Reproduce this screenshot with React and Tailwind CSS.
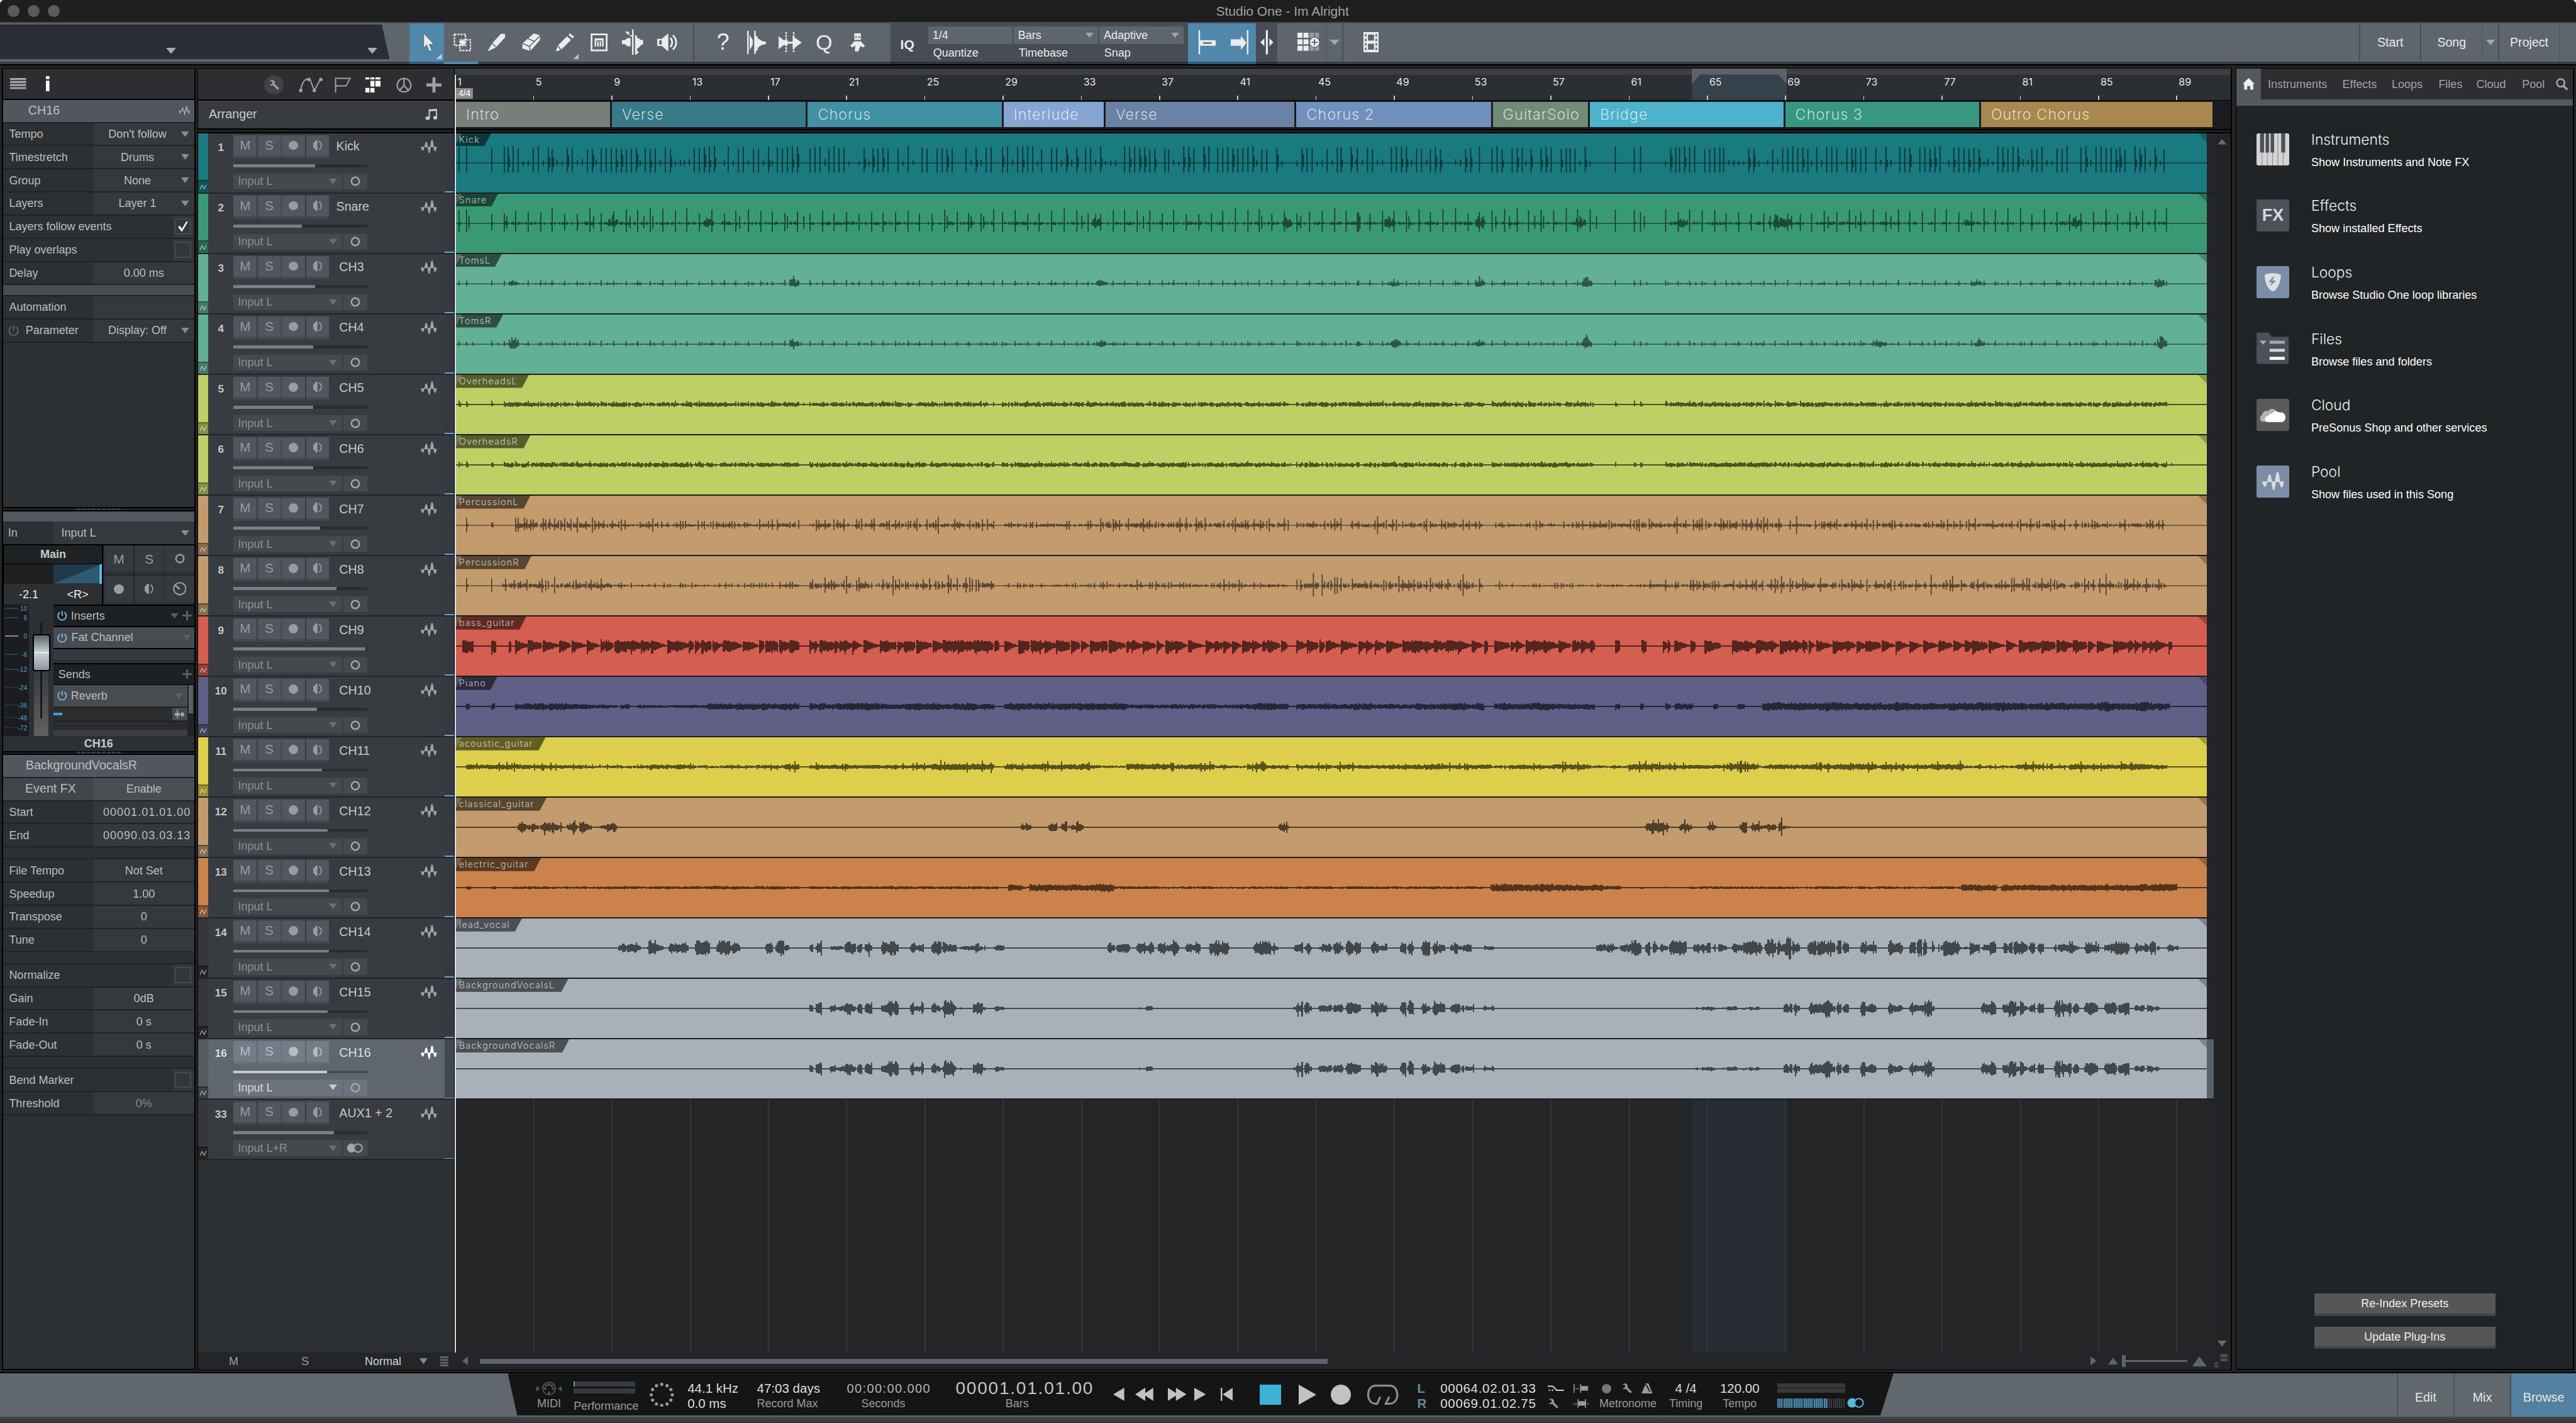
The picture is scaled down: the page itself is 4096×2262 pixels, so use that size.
import React from "react";

/* ---------- shared glyphs ---------- */

const Down = ({ className }) => (
  <svg viewBox="0 0 10 7" preserveAspectRatio="none" className={`shrink-0 ${className}`}>
    <path d="M0 0h10L5 7z" fill="currentColor" />
  </svg>
);

const Svg = ({ box, className, children }) => (
  <svg viewBox={box} className={`shrink-0 ${className}`} fill="currentColor">
    {children}
  </svg>
);

const WaveGlyph = ({ className }) => (
  <Svg box="0 0 32 28" className={className}>
    <path d="M0 14h7.500c-1 5-2 8-3.500 8s-3-4-4-8zM7 15C8.500 9 9 4 11 4s2.500 6 3.500 11zM13.500 14h6.500c-1 8-1.500 13-3 13s-2.800-6-3.500-13zM18.500 15C20 6 20.500 0 22.500 0s3 8 3.700 15zM25 14h7c-1 5-2 9-3.500 9s-2.700-4-3.500-9z" />
  </Svg>
);

const Power = ({ className }) => (
  <Svg box="0 0 24 24" className={className}>
    <path d="M7.500 4.500a9 9 0 1 0 9 0M12 2v10" fill="none" stroke="currentColor" strokeWidth="2.600" />
  </Svg>
);

const Plus = ({ className }) => (
  <Svg box="0 0 20 20" className={className}>
    <path d="M8 0h4v8h8v4h-8v8H8v-8H0V8h8z" />
  </Svg>
);

const Wrench = ({ className }) => (
  <Svg box="0 0 22 22" className={className}>
    <path d="M2 4a6 6 0 0 1 9-1 6 6 0 0 1 1 6l9 9-3 3-9-9a6 6 0 0 1-7-1l4-1 2-2-1-4z" />
  </Svg>
);

const Monitor = ({ className }) => (
  <Svg box="0 0 18 20" className={className}>
    <path d="M8.500 0v20H5.500L0 14V6L5.500 0z" />
    <path d="M11.500 2c6 3 6 13 0 16" fill="none" stroke="currentColor" strokeWidth="2.200" />
  </Svg>
);

const Ring = ({ className }) => (
  <Svg box="0 0 20 20" className={className}>
    <circle cx="10" cy="10" r="7.800" fill="none" stroke="currentColor" strokeWidth="3" />
  </Svg>
);

const Dot = ({ className }) => <div className={`rounded-full shrink-0 ${className}`} />;

const Bars3 = ({ className }) => (
  <svg viewBox="0 0 32 22" preserveAspectRatio="none" fill="currentColor" className={`shrink-0 ${className}`}>
    <path d="M0 0h32v4H0zM0 6h32v4H0zM0 12h32v4H0zM0 18h32v4H0z" />
  </svg>
);

/* ---------- title bar and toolbar ---------- */

function TitleBar() {
  return (
    <header className="flex h-44 shrink-0 items-center bg-[#1e1e1e] pl-15">
      <div className="flex gap-16">
        <Dot className="size-24 bg-[#5b5b5b]" />
        <Dot className="size-24 bg-[#5b5b5b]" />
        <Dot className="size-24 bg-[#5b5b5b]" />
      </div>
      <div className="ml-2297 whitespace-nowrap text-[21px] text-[#a2a2a2]">Studio One - Im Alright</div>
    </header>
  );
}

const TOOL_ICONS = [
  <Svg key="arrow" box="0 0 24 36" className="ml-4 h-36 w-24">
    <path d="M1 0v29l6-6 5 13 5-2-5-12h9z" stroke="#3c5566" strokeWidth="1" />
  </Svg>,
  <Svg key="range" box="0 0 36 36" className="size-36">
    <path d="M2 2h22v22H2zM13 13h21v21H13z" fill="none" stroke="currentColor" strokeWidth="3" strokeDasharray="4 2" />
    <path d="M14 14h9v9h-9z" />
  </Svg>,
  <Svg key="split" box="0 0 36 36" className="size-36">
    <path d="M27 1h8v7L18 27l-8-8zM9 21l8 7L0 36z" />
  </Svg>,
  <Svg key="erase" box="0 0 38 36" className="h-36 w-38">
    <path d="M25 0l12 4v9L18 35 2 30V20z" />
    <path d="M2 20l14 6L37 5M16 26l2 9M12 10l14 6" fill="none" stroke="#5f656d" strokeWidth="2" />
  </Svg>,
  <Svg key="paint" box="0 0 36 36" className="size-36">
    <path d="M22 6l8 7L11 32l-7-8zM25 3l3-3 8 7-3 3zM3 26l6 7-9 3z" />
  </Svg>,
  <Svg key="mute" box="0 0 34 36" className="h-36 w-34">
    <path d="M2 2h30v32H2z" fill="none" stroke="currentColor" strokeWidth="3.500" />
    <path d="M8 10h18v16H8z" />
    <path d="M12 26V15h10v11M17 15v11" fill="none" stroke="#5f656d" strokeWidth="2" />
  </Svg>,
  <Svg key="bend" box="0 0 46 50" className="h-50 w-46">
    <path d="M0 21h6l5-4h6v16h-6l-5-4H0zM6 4h8v7l6 4V0h3v50h-3V12L12 10zM26 10l4 3v3l4 2 4 3h4v8l-4 2-4 4-4 3v4l-4 3zM26 40l8 5-8 6z" />
  </Svg>,
  <Svg key="listen" box="0 0 40 36" className="h-36 w-40">
    <path d="M0 11h9L22 0v36L9 25H0z" />
    <path d="M4 14v8h5v-8z" fill="#5f656d" />
    <path d="M26 9c5 5 5 13 0 18M31 4c9 8 9 20 0 28" fill="none" stroke="currentColor" strokeWidth="3.500" />
  </Svg>,
];

const EDIT_ICONS = [
  <span key="help" className="text-[36px] font-normal">?</span>,
  <Svg key="strip" box="0 0 38 46" className="h-46 w-38">
    <path d="M0 0h3v46H0zM5 8l6 10V28L5 38zM14 0h3v46h-3zM17 9l4 3v3l4 2 4 3 9 2v4l-9 2-4 3-4 3v4l-4 3z" />
  </Svg>,
  <Svg key="stretch" box="0 0 46 42" className="h-42 w-46">
    <path d="M0 8l10 8h8v10h-8L0 34zM46 21L28 8v26zM18 19h10v4H18z" />
    <path d="M15 0v42M30 0v42" stroke="currentColor" strokeWidth="3" strokeDasharray="4 2" />
  </Svg>,
  <span key="q" className="text-[34px]">Q</span>,
  <Svg key="macro" box="0 0 30 36" className="h-36 w-30">
    <path d="M8 0h13v13H8zM0 25l8-9h13l8 9-3 3-6-3-4 11h-7l1-12-6 4z" />
    <path d="M10 6h3v3h-3zM16 6h3v3h-3z" fill="#5f656d" />
  </Svg>,
];

function Toolbar() {
  return (
    <div className="flex h-84 shrink-0 border-t-2 border-[#484c54] bg-[#5f656d] text-[#ececec]">
      <div className="relative flex w-814 shrink-0 flex-col pt-2">
        <div className="flex h-70 w-774 items-end bg-[#2a2d34] pb-11 [clip-path:polygon(0_0,98%_0,100%_100%,0_100%)]">
          <Down className="ml-330 h-12 w-20 text-[#a9abae]" />
          <Down className="ml-380 h-12 w-20 text-[#a9abae]" />
        </div>
        <div className="mt-4 h-6 bg-[#3c3e45]" />
      </div>
      {TOOL_ICONS.map((icon, i) => (
        <div key={i} className="flex w-68 shrink-0 flex-col">
          <div className={`relative flex h-76 items-center justify-center pl-5 ${i === 0 ? "bg-[#5088ab]" : ""}`}>
            {icon}
            {(i === 0 || i === 4) && (
              <Svg box="0 0 12 12" className="absolute right-4 bottom-4 size-12 text-white/60">
                <path d="M12 0v12H0z" />
              </Svg>
            )}
          </div>
          <div className={`h-6 ${i === 0 ? "bg-[#38597a]" : i === 1 ? "bg-[#5088ab]" : "bg-[#3c3e45]"}`} />
        </div>
      ))}
      <div className="flex w-412 flex-col">
        <div className="flex h-76">
          <div className="w-22 border-r-2 border-[#484c54]" />
          <div className="flex w-390 pl-23">
            {EDIT_ICONS.map((icon, i) => (
              <div key={i} className="flex w-67 items-center justify-center">{icon}</div>
            ))}
          </div>
        </div>
        <div className="h-6 bg-[#3c3e45]" />
      </div>
      <div className="flex w-768 flex-col">
        <div className="flex h-76 bg-[#484c54]">
          <div className="flex w-74 items-center pt-6 pl-19 text-[21px] font-bold">IQ</div>
          <div className="flex w-508 gap-2 pt-6">
            {[
              ["1/4", "Quantize", false],
              ["Bars", "Timebase", true],
              ["Adaptive", "Snap", true],
            ].map(([value, label, menu]) => (
              <div key={label} className="flex w-168 flex-col text-[18px]">
                <div className="flex h-36 items-center justify-between bg-[#5f656d] pr-9 pl-9">
                  {value}
                  {menu && <Down className="h-10 w-16 text-[#a2a5a9]" />}
                </div>
                <div className="flex h-36 items-center pl-10">{label}</div>
              </div>
            ))}
          </div>
          <div className="ml-8 flex w-136 items-center bg-[#5088ab] pl-20">
            <Svg box="0 0 36 48" className="h-48 w-36">
              <path d="M1 0h3v48H1zM4 20h31v11H4z" />
              <path d="M10 24h17v3H10z" fill="#5f656d" />
            </Svg>
            <Svg box="0 0 36 48" className="ml-29 h-48 w-36">
              <path d="M32 0h3v48h-3zM0 18h20v-7l11 14-11 14v-8H0z" />
            </Svg>
          </div>
          <div className="flex flex-1 items-center justify-center">
            <Svg box="0 0 26 48" className="h-48 w-26">
              <path d="M11 0h4v48h-4zM8 16v16L0 24zM18 16v16l8-8z" />
            </Svg>
          </div>
        </div>
        <div className="flex h-6 bg-[#303238]">
          <div className="ml-590 w-136 bg-[#38597a]" />
        </div>
      </div>
      <div className="flex flex-1 flex-col">
        <div className="flex h-76">
          <div className="flex w-99 items-center border-r-2 border-[#555b62] pl-40">
            <Svg box="0 0 44 38" className="h-38 w-44">
              <path d="M0 0h10v10H0zM12 0h10v10H12zM0 13h10v10H0zM12 13h10v10H12zM0 26h10v10H0zM12 26h10v10H12z" />
              <path d="M24 0h9v10h-9zM35 0h8v10h-8zM24 26h9v10h-9zM35 26h8v10h-8z" opacity=".4" />
              <circle cx="34" cy="19" r="10" stroke="#5f656d" strokeWidth="1.500" />
              <path d="M28 19h12M34 13v12" stroke="#484c54" strokeWidth="2" />
            </Svg>
          </div>
          <div className="flex w-32 items-center justify-center border-r-2 border-[#484c54]">
            <Down className="h-11 w-20 text-[#a2a5a9]" />
          </div>
          <div className="flex w-110 items-center justify-center">
            <Svg box="0 0 30 40" className="h-40 w-30">
              <path d="M0 0h30v40H0z" />
              <path d="M9 5h12v12H9zM9 23h12v12H9zM3 4h3v5H3zM3 13h3v5H3zM3 22h3v5H3zM3 31h3v5H3zM24 4h3v5h-3zM24 13h3v5h-3zM24 22h3v5h-3zM24 31h3v5h-3z" fill="#5f656d" />
            </Svg>
          </div>
          <div className="ml-1908 flex text-[19.600px]">
            <div className="flex w-122 items-center justify-center border-l-2 border-[#484c54]">Start</div>
            <div className="flex w-122 items-center justify-center border-l-2 border-[#484c54]">Song</div>
            <div className="flex w-32 items-center justify-center border-l-2 border-[#565c63]">
              <Down className="h-11 w-18 text-[#a2a5a9]" />
            </div>
            <div className="flex w-122 items-center justify-center border-l-2 border-[#484c54]">Project</div>
            <div className="w-32 border-l-2 border-[#565c63]" />
          </div>
        </div>
        <div className="h-6 bg-[#3c3e45]" />
      </div>
    </div>
  );
}

/* ---------- inspector ---------- */

function Row({ label, value, menu, check, dim, lit, power, mono }) {
  const isCheck = check !== undefined;
  return (
    <div className={`flex h-46 shrink-0 border-b-2 border-[#202326] text-[18px] text-[#bcbebf] ${lit ? "bg-[#42464a]" : "bg-[#2c3033]"}`}>
      <div className={`flex items-center whitespace-nowrap ${isCheck ? "w-336" : "w-180"} ${lit ? "pl-44 text-[19.700px]" : "pl-12"}`}>
        {power && <Power className="mr-12 -ml-3 size-24 text-[#5d6062]" />}
        {label}
      </div>
      {isCheck ? (
        <div className="flex w-44 items-center justify-center bg-[#33373a]">
          <div className="flex size-32 items-center justify-center border-2 border-[#46494d]">
            {check && (
              <Svg box="0 0 22 22" className="size-22 text-white">
                <path d="M1 12l4-2 4 6L18 1l3 1L9 22z" />
              </Svg>
            )}
          </div>
        </div>
      ) : (
        <div className={`flex w-200 items-center ${lit ? "bg-[#4b4f53]" : "bg-[#35383c]"}`}>
          <div className={`flex-1 whitespace-nowrap text-center ${dim ? "text-[#85898c]" : ""} ${mono ? "pl-12 tracking-[1px]" : ""}`}>{value}</div>
          {menu && <Down className="mr-10 h-11 w-16 text-[#8a8c8e]" />}
        </div>
      )}
    </div>
  );
}

const Spacer = () => <div className="h-24 shrink-0 border-b-2 border-[#202326] bg-[#2c3033]" />;

const Grip = () => (
  <div className="flex h-8 shrink-0 items-center border-y-2 border-black bg-[#222325] pl-146">
    <div className="flex gap-2">
      {Array.from({ length: 9 }, (_, i) => (
        <div key={i} className="h-4 w-8 bg-[#3c3f44]" />
      ))}
    </div>
  </div>
);

const FADER_MARKS = [
  ["10", "h-19"], ["6", "h-36"], ["0", "h-36"], ["-6", "h-30"], ["-12", "h-36"],
  ["-24", "h-35"], ["-36", "h-25"], ["-48", "h-20"], ["-72", "h-20"],
];

function ChannelStrip() {
  const cell = "flex items-center justify-center border-b-4 border-[#2d3034] bg-[#36393e] text-[21px] text-[#9a9c9d]";
  return (
    <div className="flex h-380 shrink-0 flex-col bg-black pt-2">
      <div className="flex h-118">
        <div className="flex w-199 flex-col px-2">
          <div className="flex h-36 items-center justify-center bg-[#1e2225] text-[18px] font-bold text-[#c9cbcc]">Main</div>
          <div className="mt-2 flex h-38">
            <div className="w-98 bg-[#1f1f20]" />
            <svg viewBox="0 0 91 38" preserveAspectRatio="none" className="h-38 w-91">
              <path d="M0 0h91v38H0z" fill="#203a4c" />
              <path d="M0 38L91 2v36z" fill="#2e5a71" />
            </svg>
            <div className="w-6 bg-[#5cb8f0]" />
          </div>
          <div className="flex h-42 items-center bg-[#2c3033] text-[18px] text-[#eeeeee]">
            <div className="w-98 text-center">-2.1</div>
            <div className="w-97 text-center">&lt;R&gt;</div>
          </div>
        </div>
        <div className="grid flex-1 grid-cols-3 grid-rows-2 gap-2 bg-[#232629] pl-2">
          <div className={cell}>M</div>
          <div className={cell}>S</div>
          <div className={cell}><Ring className="size-20" /></div>
          <div className={cell}><Dot className="size-19 bg-[#9a9c9d]" /></div>
          <div className={cell}><Monitor className="h-20 w-18" /></div>
          <div className={cell}>
            <Svg box="0 0 26 26" className="size-27">
              <circle cx="13" cy="13" r="11.500" fill="none" stroke="currentColor" strokeWidth="2.500" />
              <path d="M4 6l9 8" stroke="currentColor" strokeWidth="3.500" />
            </Svg>
          </div>
        </div>
      </div>
      <div className="flex h-260">
        <div className="flex w-52 flex-col overflow-hidden bg-[#1b1d20] pl-4">
          {FADER_MARKS.map(([mark, h]) => (
            <div key={mark} className={`flex shrink-0 items-start justify-between pr-4 ${h}`}>
              <div className={`mt-6 h-2 w-26 ${mark === "0" ? "bg-[#8a8d90]" : "bg-[#1f465a]"}`} />
              <span className="mt-2 text-[10px] text-[#4fa3cf]">{mark}</span>
            </div>
          ))}
        </div>
        <div className="relative w-48 bg-[#2c3033]">
          <div className="absolute bottom-0 left-10 h-130 w-28 bg-linear-to-b from-[#383b3e] to-[#606163]" />
          <div className="absolute top-36 left-22 h-190 w-4 bg-[#17191b]" />
          <div className="absolute top-58 left-7 flex h-74 w-35 flex-col items-center justify-center rounded-sm border-2 border-black bg-linear-to-b from-[#5d666b] via-[#c9d4da] to-[#8d979c]">
            <div className="h-2 w-full bg-white" />
          </div>
        </div>
        <div className="flex flex-1 flex-col text-[18px] text-[#b9bcbe]">
          <div className="mt-2 flex h-40 items-center bg-[#1d2124] pl-6">
            <Power className="size-22 text-[#79b9df]" />
            <span className="ml-7">Inserts</span>
            <Down className="ml-auto h-10 w-16 text-[#5b5e60]" />
            <Plus className="mr-5 ml-8 size-19 text-[#5b5e60]" />
          </div>
          <div className="mt-2 flex h-42 items-center bg-[#474c51] pl-6">
            <Power className="size-22 text-[#79b9df]" />
            <span className="ml-8">Fat Channel</span>
            <Down className="mr-6 ml-auto h-11 w-16 text-[#5c6165]" />
          </div>
          <div className="mt-2 h-21 bg-[#36393f]" />
          <div className="h-7 bg-[#2c3033]" />
          <div className="mt-2 flex h-40 items-center bg-[#1d2124] pl-10">
            Sends
            <Plus className="mr-5 ml-auto size-19 text-[#5b5e60]" />
          </div>
          <div className="mt-2 flex flex-1 bg-[#202225]">
            <div className="flex w-266 flex-col">
              <div className="flex h-42 items-center bg-[#474c51] pl-6">
                <Power className="size-22 text-[#79b9df]" />
                <span className="ml-7">Reverb</span>
                <Down className="mr-8 ml-auto h-11 w-16 text-[#5c6165]" />
              </div>
              <div className="mt-2 flex h-26">
                <div className="flex flex-1 items-center bg-[#2b2d2f]">
                  <div className="h-6 w-18 bg-[#41a6dd]" />
                </div>
                <div className="flex w-30 items-center justify-center bg-[#474c51] text-[#a8abad]">
                  <Svg box="0 0 18 18" className="size-18">
                    <path d="M4 0h2v18H4zM0 7h10v5H0zM12 6h6v7h-6z" />
                  </Svg>
                </div>
              </div>
              <div className="mt-3 h-6 bg-[#2b2d2f]" />
              <div className="mt-2 h-6 bg-[#2b2d2f]" />
              <div className="mt-1 flex-1 bg-[#3a3e42]" />
            </div>
            <div className="ml-3 h-56 w-9 bg-[#5e5f69]" />
          </div>
        </div>
      </div>
    </div>
  );
}

function Inspector() {
  return (
    <aside className="w-384 shrink-0 bg-black p-2">
      <div className="flex h-full flex-col bg-[#2c3033]">
        <div className="flex h-60 shrink-0 items-center bg-[#2e2d32] pl-14">
          <Bars3 className="h-22 w-32 text-[#a4a6a8]" />
          <Svg box="0 0 8 30" className="ml-39 h-30 w-8 text-white">
            <path d="M0 0h7v6H0zM0 9h7v21H0z" />
          </Svg>
        </div>
        <div className="h-2 shrink-0 bg-black" />
        <div className="flex h-46 shrink-0 items-center justify-between border-b-2 border-[#202326] bg-[#52565f] pr-8 pl-50 text-[19.700px] text-[#bdbfc1]">
          CH16
          <WaveGlyph className="h-20 w-23 text-[#9fa2a5]" />
        </div>
        <Row label="Tempo" value="Don't follow" menu />
        <Row label="Timestretch" value="Drums" menu />
        <Row label="Group" value="None" menu />
        <Row label="Layers" value="Layer 1" menu />
        <Row label="Layers follow events" check />
        <Row label="Play overlaps" check={false} />
        <Row label="Delay" value="0.00 ms" />
        <div className="h-22 shrink-0 border-b-2 border-[#202326] bg-[#474c50]" />
        <Row label="Automation" value="" />
        <Row label="Parameter" value="Display: Off" menu power />
        <div className="h-327 shrink-0" />
        <Grip />
        <div className="h-20 shrink-0 bg-[#52565f]" />
        <div className="flex h-46 shrink-0 items-center text-[18px] text-[#bcbebf]">
          <div className="w-102 pl-10">In</div>
          <div className="flex h-full flex-1 items-center justify-between bg-[#35383c] pr-10 pl-14">
            Input L
            <Down className="h-11 w-16 text-[#8a8c8e]" />
          </div>
        </div>
        <ChannelStrip />
        <div className="flex h-30 shrink-0 items-center justify-center text-[18px] font-bold text-[#c9cbcc]">CH16</div>
        <Grip />
        <div className="flex h-46 shrink-0 items-center border-b-2 border-[#202326] bg-[#52565f] pl-45 text-[19.700px] text-[#bdbfc1]">BackgroundVocalsR</div>
        <Row label="Event FX" value="Enable" lit />
        <Row label="Start" value="00001.01.01.00" mono />
        <Row label="End" value="00090.03.03.13" mono />
        <Spacer />
        <Row label="File Tempo" value="Not Set" />
        <Row label="Speedup" value="1.00" />
        <Row label="Transpose" value="0" />
        <Row label="Tune" value="0" />
        <Spacer />
        <Row label="Normalize" check={false} />
        <Row label="Gain" value="0dB" />
        <Row label="Fade-In" value="0 s" />
        <Row label="Fade-Out" value="0 s" />
        <Spacer />
        <Row label="Bend Marker" check={false} />
        <Row label="Threshold" value="0%" dim />
      </div>
    </aside>
  );
}

/* ---------- waveforms ---------- */

const EVENT_W = 3479;
const STEP = 2.5;
const COLS = Math.floor(EVENT_W / STEP);

// Phrases are listed in overview units; the song is mapped in two stretches.
const part1 = (list) => list.map(([a, b, k = 1]) => [a * 1.148 - 6, b * 1.148 - 6, k]);
const part2 = (list) => list.map(([a, b, k = 1]) => [a * 1.135 + 1754, b * 1.135 + 1754, k]);

const BAND = [
  ...part1([[10, 14], [23, 27], [66, 70], [87, 600], [617, 938], [951, 1446], [1461, 1568]]),
  ...part2([[32, 253], [268, 446], [484, 488], [516, 520], [528, 532], [571, 1451]]),
];
const PERC_L = [
  ...part1([[23, 27, 1.4], [66, 71, 1.2], [107, 275, 1.3], [275, 560, 0.75], [560, 600, 0.9], [617, 938, 1], [955, 1120, 0.7], [1120, 1446, 1.1], [1461, 1568, 0.9]]),
  ...part2([[35, 253, 0.9], [275, 440, 0.7], [440, 570, 1], [570, 620, 0.9], [620, 785, 1.2], [785, 1451, 0.95]]),
];
const PERC_R = [
  ...part1([[23, 27, 1.4], [66, 71, 1.2], [85, 275, 1.1], [275, 560, 0.45], [560, 600, 0.7], [617, 938, 1.25], [955, 1120, 0.45], [1120, 1446, 0.65], [1461, 1568, 1.25]]),
  ...part2([[35, 253, 1.2], [275, 540, 0.45], [540, 730, 0.9], [730, 1451, 1.15]]),
];
const ACOUSTIC = [
  ...part1([[23, 600], [617, 938], [955, 1446], [1461, 1568]]),
  ...part2([[35, 1451]]),
];
const BASS = [
  ...part1([[17, 36], [66, 75], [97, 102], [107, 600], [617, 945], [955, 1447], [1461, 1568]]),
  ...part2([[35, 260], [272, 448], [484, 492], [529, 538], [568, 581], [587, 624], [640, 668], [688, 1460]]),
];
const PIANO = [
  ...part1([[23, 30], [66, 73], [108, 245], [245, 285, 0.5], [290, 305, 0.7], [318, 440, 0.5], [440, 600], [617, 938], [955, 1165, 1.1], [1165, 1385, 0.7], [1385, 1446], [1461, 1568]]),
  ...part2([[35, 255], [271, 448], [484, 492], [527, 535], [571, 581], [587, 620], [655, 663], [698, 710], [742, 1455, 1.25]]),
];
const CLASSICAL = [
  ...part1([[112, 150], [152, 240, 1.2], [253, 285], [984, 1003], [1030, 1047], [1052, 1092, 1.2], [1430, 1446, 1.1]]),
  ...part2([[537, 578, 1.2], [595, 620], [645, 662, 0.8], [701, 714, 1.2], [722, 790]]),
];
const ELECTRIC = [
  ...part1([[23, 32, 0.5], [66, 76, 0.5], [103, 600, 0.45], [617, 944, 0.45], [962, 985, 1], [985, 998, 0.4], [998, 1145, 1.25], [1145, 1446, 0.4], [1461, 1568, 0.4]]),
  ...part2([[35, 255, 0.4], [265, 462, 1.1], [462, 495, 0.6], [527, 535, 0.4], [571, 573, 0.4], [613, 1088, 0.4], [1088, 1152, 1], [1160, 1468, 1.05]]),
];
const CHORUSES = [
  ...part1([[617, 624], [627, 640], [653, 678, 0.6], [678, 698, 1.1], [701, 709], [712, 725, 1.1], [741, 771, 1.2], [791, 816, 0.9], [828, 871, 1.2], [879, 922, 0.8], [937, 955, 0.5], [1455, 1459, 0.6], [1461, 1471, 1.1], [1474, 1486, 0.9], [1498, 1520, 0.6], [1522, 1540, 1.1], [1544, 1568]]),
  ...part2([[12, 20], [26, 38], [56, 70, 1.2], [70, 85, 0.8], [107, 117, 1.1], [119, 131, 1.1], [143, 160], [163, 186, 1.2], [195, 240, 0.8], [252, 272, 0.5]]),
];
const LEAD = [
  ...CHORUSES,
  ...part1([[287, 291, 1.3], [291, 326, 0.8], [336, 365], [373, 408, 0.9], [420, 446], [456, 498], [542, 555], [558, 583], [1134, 1147], [1149, 1172, 0.8], [1183, 1214], [1220, 1257], [1268, 1295], [1303, 1345], [1385, 1430]]),
  ...part2([[450, 488, 0.7], [492, 530], [536, 578], [579, 612, 1.3], [620, 680, 0.8], [688, 740], [746, 780, 1.1], [780, 792, 1.7], [792, 808], [820, 868, 1.2], [870, 880], [882, 892], [912, 942, 1.1], [961, 988, 1.1], [998, 1042, 1.1], [1050, 1122, 1.1], [1127, 1150, 1.2], [1162, 1205], [1208, 1220], [1223, 1235], [1253, 1295, 1.1], [1305, 1332, 1.1], [1340, 1385, 1.1], [1393, 1438, 0.9], [1450, 1470, 0.5]]),
];
const BACKING = [
  ...CHORUSES,
  ...part1([[1186, 1195, 0.35], [1198, 1211, 0.4]]),
  ...part2([[622, 660, 0.3], [666, 700, 0.35], [705, 742, 0.3], [778, 794], [796, 808], [822, 868, 1.2], [870, 880], [882, 894], [912, 942, 1.3], [961, 988, 1.1], [998, 1042, 1.2], [1125, 1150], [1162, 1205, 1.1], [1208, 1220], [1223, 1235], [1253, 1282, 1.3], [1285, 1295], [1305, 1330, 1.1], [1340, 1362], [1365, 1385, 1.2], [1393, 1438, 0.7]]),
];

function makeRandom(seed) {
  let s = seed * 7919 + 13;
  return () => {
    s = (s * 1664525 + 1013904223) % 4294967296;
    return s / 4294967296;
  };
}

const SPIKY = ["kick", "snare", "toms", "perc"];

function wavePath({ kind, spans, seed, fills = [] }) {
  const rnd = makeRandom(seed);
  const up = new Float32Array(COLS);
  const dn = new Float32Array(COLS);
  const put = (i, u, d) => {
    if (i < 0 || i >= COLS) return;
    up[i] = Math.max(up[i], u);
    dn[i] = Math.max(dn[i], d);
  };
  for (const [a, b, k] of spans) {
    const from = Math.round(a / STEP);
    const to = Math.round(b / STEP);
    const len = to - from;
    if (kind === "kick") {
      for (let x = a; x < b; x += 9.72) {
        const i = Math.round(x / STEP);
        if (rnd() < 0.6 || len < 6) {
          put(i, 27 + rnd() * 7, 19);
          if (rnd() < 0.35) put(i + 1, 14 * rnd() + 4, 8);
        } else if (rnd() < 0.7) put(i, 3 + rnd() * 5, 4 + rnd() * 3);
      }
    } else if (kind === "snare" || kind === "toms" || kind === "overhead") {
      const big = kind === "snare" ? 24 : 6;
      const small = kind === "snare" ? 3.5 : kind === "toms" ? 1.8 : 4.4;
      const density = kind === "overhead" ? 0.85 : 0.5;
      for (let i = from; i < to; i++) if (rnd() < density) put(i, small * (0.5 + rnd() * 0.6), small * (0.5 + rnd() * 0.6));
      for (let x = a; x < b; x += 24.3) {
        const i = Math.round(x / STEP);
        const v = 0.75 + rnd() * 0.5;
        put(i, big * v, big * Math.min(v, 0.9) * 0.8);
        if (rnd() < 0.25) put(i + 2 + Math.floor(rnd() * 4), big * 0.6, big * 0.45);
      }
    } else if (kind === "perc") {
      for (let i = from; i < to; i++) if (rnd() < 0.75) put(i, k * (1.5 + rnd() * 3), k * (1.5 + rnd() * 3));
      for (let x = a; x < b; x += 6.1) {
        if (rnd() < 0.6 || len < 6) {
          const i = Math.round(x / STEP);
          const v = k * (4 + rnd() * 10) * (rnd() < 0.08 ? 1.5 : 1);
          put(i, v, v * (0.6 + rnd() * 0.4));
        }
      }
    } else if (kind === "bass") {
      let note = 0;
      let size = 12;
      let decay = 0.7;
      for (let i = from; i < to; i++) {
        if (note <= 0) {
          note = size = 4 + Math.floor(rnd() * 10);
          decay = 0.2 + rnd() * 0.7;
          if (i > from && rnd() < 0.35) {
            put(i, 1.5, 1.5);
            continue;
          }
        }
        const t = 1 - decay * (1 - note / size);
        put(i, 12 * t * (0.75 + rnd() * 0.35), 15 * t * t * (0.65 + rnd() * 0.5));
        note--;
      }
    } else if (kind === "piano" || kind === "electric") {
      let level = 1;
      for (let i = from; i < to; i++) {
        if (rnd() < 0.12) level = 0.75 + rnd() * 0.4;
        put(i, 6.5 * k * level * (0.55 + rnd() * 0.5), 6.5 * k * level * (0.6 + rnd() * 0.5));
      }
    } else if (kind === "acoustic") {
      let level = 1;
      for (let i = from; i < to; i++) {
        if (rnd() < 0.08) level = 0.6 + rnd() * 0.9;
        const spike = rnd() < 0.1 ? 2 : 1;
        put(i, 3.8 * level * spike * (0.6 + rnd() * 0.6), 3.8 * level * spike * (0.6 + rnd() * 0.6));
      }
    } else {
      let level = 0.8;
      const classical = kind === "classical";
      const peak = classical ? 9 : 14;
      for (let i = from; i < to; i++) {
        const t = (i - from) / len;
        if (rnd() < 0.35) level = 0.35 + rnd() * 0.75;
        if (len > 14 && rnd() < 0.06) level = 0.15;
        const env = Math.min(1, 0.6 + t * 5, 0.45 + (1 - t) * 3);
        const spike = classical && rnd() < 0.18 ? 1.9 : 1;
        put(i, peak * k * level * env * spike * (0.6 + rnd() * 0.5), peak * k * level * env * spike * (0.6 + rnd() * 0.5));
      }
    }
  }
  for (const [x, h] of fills) {
    const i = Math.round(x / STEP);
    for (let n = -3; n <= 4; n++) put(i + n, (h * (0.3 + rnd() * 0.9)) / (1 + Math.abs(n) * 0.3), (h * (0.3 + rnd() * 0.4)) / (1 + Math.abs(n) * 0.2));
  }
  const w = SPIKY.includes(kind) ? 2.1 : 2.5;
  let d = "";
  for (let i = 0; i < COLS; i++) {
    if (up[i] + dn[i] > 2.4) {
      d += `M${i * STEP} ${(59 - up[i]).toFixed(1)}h${w}V${(59 + dn[i]).toFixed(1)}h-${w}z`;
    }
  }
  return d;
}

/* ---------- tracks ---------- */

const TRACKS = [
  { n: 1, name: "Kick", clip: "Kick", bg: "bg-[#197a80]", tag: "w-70", vol: "w-162", kind: "kick", spans: BAND },
  { n: 2, name: "Snare", clip: "Snare", bg: "bg-[#3a9975]", tag: "w-84", vol: "w-136", kind: "snare", spans: BAND, fills: [[310, 14], [500, 14], [1270, 16], [1650, 18], [1852, 16], [2032, 16], [2232, 16], [2435, 14], [2625, 18], [2640, 16], [3005, 12], [3218, 16]] },
  { n: 3, name: "CH3", clip: "TomsL", bg: "bg-[#62b095]", tag: "w-91", vol: "w-162", kind: "toms", spans: BAND, fills: [[112, 8], [670, 14], [1280, 10], [1862, 10], [2033, 14], [2245, 15], [3020, 9], [3383, 14]] },
  { n: 4, name: "CH4", clip: "TomsR", bg: "bg-[#62b095]", tag: "w-94", vol: "w-158", kind: "toms", spans: BAND, fills: [[112, 18], [670, 15], [1280, 10], [1864, 13], [2033, 9], [2245, 18], [2828, 12], [3026, 10], [3388, 18]] },
  { n: 5, name: "CH5", clip: "OverheadsL", bg: "bg-[#bed063]", tag: "w-145", vol: "w-158", kind: "overhead", spans: BAND },
  { n: 6, name: "CH6", clip: "OverheadsR", bg: "bg-[#bed063]", tag: "w-148", vol: "w-158", kind: "overhead", spans: BAND },
  { n: 7, name: "CH7", clip: "PercussionL", bg: "bg-[#c39b6d]", tag: "w-148", vol: "w-172", kind: "perc", spans: PERC_L },
  { n: 8, name: "CH8", clip: "PercussionR", bg: "bg-[#c39b6d]", tag: "w-150", vol: "w-205", kind: "perc", spans: PERC_R },
  { n: 9, name: "CH9", clip: "bass_guitar", bg: "bg-[#d45e4f]", tag: "w-140", vol: "w-262", kind: "bass", spans: BASS },
  { n: 10, name: "CH10", clip: "Piano", bg: "bg-[#605f87]", tag: "w-82", vol: "w-166", kind: "piano", spans: PIANO },
  { n: 11, name: "CH11", clip: "acoustic_guitar", bg: "bg-[#ddce4c]", tag: "w-178", vol: "w-176", kind: "acoustic", spans: ACOUSTIC },
  { n: 12, name: "CH12", clip: "classical_guitar", bg: "bg-[#c39b6d]", tag: "w-180", vol: "w-187", kind: "classical", spans: CLASSICAL },
  { n: 13, name: "CH13", clip: "electric_guitar", bg: "bg-[#cb824b]", tag: "w-169", vol: "w-190", kind: "electric", spans: ELECTRIC },
  { n: 14, name: "CH14", clip: "lead_vocal", bg: "bg-[#a9b1b8]", tag: "w-131", vol: "w-190", plain: true, kind: "vocal", spans: LEAD },
  { n: 15, name: "CH15", clip: "BackgroundVocalsL", bg: "bg-[#a9b1b8]", tag: "w-223", vol: "w-187", plain: true, kind: "vocal", spans: BACKING },
  { n: 16, name: "CH16", clip: "BackgroundVocalsR", bg: "bg-[#a9b1b8]", tag: "w-225", vol: "w-186", plain: true, selected: true, kind: "vocal", spans: BACKING },
  { n: 33, name: "AUX1 + 2", vol: "w-200", plain: true, input: "Input L+R" },
];

function TrackHeader({ t }) {
  const sel = t.selected;
  const button = `flex h-46 w-46 shrink-0 items-center justify-center border-b-4 text-[20.500px] ${
    sel ? "border-[#686d78] bg-[#757b87] text-[#b8bcc4]" : "border-[#43464c] bg-[#52565e] text-[#999b9d]"
  }`;
  return (
    <div className={`flex h-120 shrink-0 border-b-2 border-[#222427] ${sel ? "bg-[#5f666d]" : "bg-[#383b40]"}`}>
      <div className={`flex w-20 flex-col justify-end ${t.plain ? (sel ? "bg-[#535b61]" : "bg-[#34373b]") : t.bg}`}>
        <div className={`flex h-24 items-center justify-center border-t-2 border-black/30 ${t.plain && !sel ? "bg-[#232428]" : "bg-black/30"}`}>
          <Svg box="0 0 16 12" className="h-11 w-16 text-white/65">
            <path d="M1 11L5 2l5 8 4-9" fill="none" stroke="currentColor" strokeWidth="1.500" />
          </Svg>
        </div>
      </div>
      <div className="flex flex-1">
        <div className={`w-50 shrink-0 pt-18 text-center text-[17px] font-bold ${sel ? "text-[#dcdee0]" : "text-[#c6c8ca]"}`}>{t.n}</div>
        <div className="flex w-266 shrink-0 flex-col pt-4">
          <div className="flex items-center gap-2">
            <div className={button}>M</div>
            <div className={button}>S</div>
            <div className={button}><Dot className={`size-18 ${sel ? "bg-[#b8bcc4]" : "bg-[#999b9d]"}`} /></div>
            <div className={button}><Monitor className="h-20 w-18" /></div>
            <div className={`whitespace-nowrap text-[19.700px] ${t.n < 3 ? "ml-12" : "ml-18"} ${sel ? "text-[#dcdee0]" : "text-[#c6c8ca]"}`}>{t.name}</div>
          </div>
          <div className={`mt-12 h-6 ${sel ? "bg-[#484b53]" : "bg-[#292c31]"}`}>
            <div className={`h-full ${sel ? "bg-[#c8c9cb]" : "bg-[#7b7e83]"} ${t.vol}`} />
          </div>
          <div className="mt-12 flex h-32 gap-2 text-[18px]">
            <div className={`flex w-216 items-center justify-between pr-10 pl-9 ${sel ? "bg-[#6d737e] text-[#dadbdc]" : "bg-[#45484d] text-[#8c9094]"}`}>
              {t.input || "Input L"}
              <Down className={`h-11 w-16 ${sel ? "text-[#c8cacc]" : "text-[#6b6e72]"}`} />
            </div>
            <div className={`flex w-48 items-center justify-center ${sel ? "bg-[#6d737e]" : "bg-[#45484d]"} text-[#a4a6a8]`}>
              {t.input ? (
                <Svg box="0 0 34 20" className="h-20 w-34">
                  <circle cx="10" cy="10" r="9" />
                  <circle cx="23" cy="10" r="8" fill="#45484d" stroke="currentColor" strokeWidth="2.500" />
                </Svg>
              ) : (
                <Ring className="size-20" />
              )}
            </div>
          </div>
        </div>
        <WaveGlyph className={`mt-13 ml-106 h-28 w-32 ${sel ? "text-white" : "text-[#a0a3a6]"}`} />
      </div>
      <div className={`flex w-18 shrink-0 flex-col justify-end ${sel ? "bg-[#434953]" : "bg-[#363a40]"}`}>
        <div className="h-2 bg-[#67a7d8]" />
      </div>
    </div>
  );
}

function Clip({ t }) {
  return (
    <div className="flex h-120 shrink-0 border-b-2 border-[#1c1e20]">
      <div className={`relative ml-2 w-3479 overflow-hidden ${t.bg}`}>
        <svg
          viewBox="0 0 3479 118"
          preserveAspectRatio="none"
          className="absolute inset-0 h-full w-full text-black/60"
          fill="currentColor"
          shapeRendering={SPIKY.includes(t.kind) ? "auto" : "crispEdges"}
        >
          <path d={`M0 58.200h3479v1.600H0z${wavePath({ ...t, seed: t.n === 16 ? 15 : t.n })}`} />
        </svg>
        <div className={`absolute top-0 left-0 flex h-26 items-center bg-black/55 pl-6 font-[Inter] text-[14.500px] font-light tracking-[1.100px] whitespace-nowrap text-white/70 [clip-path:polygon(0_0,100%_0,calc(100%_-_11px)_100%,0_100%)] ${t.tag}`}>
          {t.clip}
        </div>
        <Svg box="0 0 14 26" className="absolute top-0 left-0 h-22 w-12 text-white/20">
          <path d="M0 0h14L0 26z" />
        </Svg>
        <Svg box="0 0 18 18" className="absolute top-0 right-0 size-18 text-black/25">
          <path d="M0 0h18v18z" />
        </Svg>
      </div>
      <div className={`w-13 ${t.selected ? "bg-[#59616a]" : "bg-[#242528]"}`} />
    </div>
  );
}

const SECTIONS = [
  ["Intro", "w-310 bg-[#7a7e7b]"],
  ["Verse", "w-389 bg-[#387a8a]"],
  ["Chorus", "w-389 bg-[#4290a3]"],
  ["Interlude", "w-203 bg-[#86a5d2]"],
  ["Verse", "w-379 bg-[#6a82a5]"],
  ["Chorus 2", "w-390 bg-[#7190bb]"],
  ["GuitarSolo", "w-193 bg-[#6f8c78]"],
  ["Bridge", "w-388 bg-[#4eb2cb]"],
  ["Chorus 3", "w-389 bg-[#389780]"],
  ["Outro Chorus", "w-464 bg-[#a8884f]"],
];

const BAR_NUMBERS = Array.from({ length: 23 }, (_, i) => 1 + i * 4);

function TrackColumn() {
  return (
    <div className="flex w-508 shrink-0 flex-col bg-[#2c3033]">
      <div className="flex h-61 shrink-0 items-center bg-[#2e2d32] pt-4 pl-131 text-[#9fa1a3]">
        <div className="flex size-38 items-center justify-center rounded-full bg-[#424347]">
          <Wrench className="size-22" />
        </div>
        <Svg box="0 0 48 30" className="ml-30 h-30 w-48">
          <path d="M4 26C6 12 10 3 19 3M22 3l9 23M31 26L43 4" fill="none" stroke="currentColor" strokeWidth="2.500" />
          <circle cx="4" cy="26" r="3.500" /><circle cx="20" cy="4" r="3.500" /><circle cx="31" cy="26" r="3.500" /><circle cx="44" cy="4" r="3.500" />
        </Svg>
        <Svg box="0 0 34 30" className="ml-24 h-30 w-34">
          <path d="M2 30V2h29l-8 15H2" fill="none" stroke="currentColor" strokeWidth="2.500" />
        </Svg>
        <Svg box="0 0 30 30" className="ml-27 size-30 text-white">
          <path d="M0 0h8v4H0zM10 0h8v4h-8zM20 0h10v4H20zM10 7h8v11h-8zM20 7h10v11H20zM0 21h8v9H0zM10 21h8v9h-8z" />
        </Svg>
        <Svg box="0 0 30 30" className="ml-31 size-31">
          <path d="M15 2a13 13 0 1 0 .1 0zM15 2v15M15 16L6 25M15 16l9 9" fill="none" stroke="currentColor" strokeWidth="2.800" />
        </Svg>
        <Plus className="ml-29 size-30" />
      </div>
      <div className="h-3 shrink-0 bg-black" />
      <div className="flex h-54 shrink-0 items-center justify-between bg-[#383b40] pr-33 pl-21 text-[19.700px] text-[#c9cbcd]">
        Arranger
        <Svg box="0 0 24 22" className="h-22 w-24">
          <path d="M7 1l17-1v18a4 3.500 0 1 1-2.500-3.500V4L9.500 5v14A4.500 3.500 0 1 1 7 15.500z" />
        </Svg>
      </div>
      <div className="h-10 shrink-0 border-y-2 border-black bg-[#1f2022]" />
      {TRACKS.map((t) => (
        <TrackHeader key={t.n} t={t} />
      ))}
    </div>
  );
}

function Timeline() {
  return (
    <div className="relative flex w-3528 flex-col">
      <div className="flex h-62 shrink-0 flex-col bg-[#2b2e33]">
        <div className="h-12 shrink-0 bg-[#3b3e42]" />
        <div className="relative flex h-50 overflow-hidden">
          <div className="absolute -top-1 left-2457 h-51 w-189 bg-[#35414b]" />
          {BAR_NUMBERS.map((n) => (
            <div key={n} className="relative flex w-[124.420px] shrink-0 flex-col justify-between">
              <span className="pt-4 pl-5 font-[Inter] text-[16px] text-[#e8e8e8]">{n}</span>
              <div className="h-8 w-2 bg-[#c9cacb]" />
              {n === 1 && (
                <span className="absolute bottom-2 left-2 flex h-22 w-34 items-center justify-center bg-[#8b8b89] text-[14px] text-white">4/4</span>
              )}
            </div>
          ))}
        </div>
      </div>
      <svg viewBox="0 0 189 36" preserveAspectRatio="none" className="absolute top-0 left-2457 h-36 w-189">
        <path d="M0 0h189v31L172 12H17L0 31z" fill="#5f616a" />
      </svg>
      <div className="h-2 shrink-0 bg-black" />
      <div className="flex h-56 shrink-0 gap-0 bg-[#1b1c1f] py-2 pl-2">
        {SECTIONS.map(([name, cls], i) => (
          <div key={i} className={`flex h-50 shrink-0 items-center border-r-[3px] border-[#1b1c1f] pl-20 font-[Inter] text-[23.300px] font-extralight tracking-[1.200px] whitespace-nowrap text-white/90 ${cls}`}>
            {name}
          </div>
        ))}
      </div>
      <div className="h-8 shrink-0 border-y-2 border-black bg-[#1f2022]" />
      <div className="flex flex-1">
        <div className="flex w-3494 flex-col">
          {TRACKS.filter((t) => t.clip).map((t) => (
            <Clip key={t.n} t={t} />
          ))}
          <div className="relative flex flex-1 overflow-hidden bg-[#242527]">
            <div className="absolute top-0 left-2457 h-full w-189 bg-[#252b30]" />
            {BAR_NUMBERS.map((n) => (
              <div key={n} className="relative w-[124.420px] shrink-0 border-l-2 border-[#32363c]" />
            ))}
          </div>
        </div>
        <div className="flex w-34 flex-col items-center justify-between bg-[#232428] pt-12 pb-12">
          <Down className="h-11 w-18 rotate-180 text-[#6a6b74]" />
          <Down className="h-12 w-18 text-[#6a6a68]" />
        </div>
      </div>
      <div className="absolute top-12 left-0 h-2538 w-2 bg-[#e2e2e2]" />
    </div>
  );
}

function ArrangeFooter() {
  return (
    <div className="flex h-34 shrink-0 items-center bg-[#242528] text-[#9a9ca0]">
      <div className="flex w-510 items-center text-[18px]">
        <span className="ml-61">M</span>
        <span className="ml-125">S</span>
        <span className="ml-111 text-[#d2d3d5]">Normal</span>
        <Down className="ml-36 h-12 w-16 text-[#85878b]" />
        <Bars3 className="ml-26 h-20 w-16 text-[#5f616b]" />
      </div>
      <div className="flex flex-1 items-center text-[#60626c]">
        <Svg box="0 0 12 18" className="ml-14 h-18 w-12"><path d="M12 0v18L0 9z" /></Svg>
        <div className="ml-24 h-10 w-1684 bg-[#60626c]" />
        <Svg box="0 0 12 18" className="ml-1516 h-18 w-12"><path d="M0 0v18l12-9z" /></Svg>
        <Down className="ml-22 h-14 w-20 rotate-180" />
        <div className="ml-8 h-24 w-8 bg-[#60626c]" />
        <div className="h-4 w-122 bg-[#60626c]" />
        <Down className="ml-10 h-20 w-28 rotate-180" />
        <Svg box="0 0 28 28" className="ml-16 size-28 text-[#4d4e55]">
          <path d="M12 1h14v6H12zM12 9h14v6H12zM0 17h8v4H0zM0 23h8v4H0z" />
        </Svg>
      </div>
    </div>
  );
}

/* ---------- browser ---------- */

const Tile = ({ className, children }) => (
  <div className={`flex size-64 shrink-0 items-center justify-center overflow-hidden rounded-[3px] ${className}`}>{children}</div>
);

const BROWSER_ITEMS = [
  {
    title: "Instruments", text: "Show Instruments and Note FX",
    icon: (
      <Tile className="bg-[#d4d4d4]">
        <Svg box="0 0 64 64" className="size-64">
          <path d="M11 36v28M21.500 36v28M32 36v28M42.500 0v64M53 36v28" stroke="#8d8f92" strokeWidth="1.500" />
          <path d="M7 0h8v38H7zM18 0h7v38h-7zM28 0h7v38h-7zM49 0h8v38h-8z" fill="#4d525a" />
        </Svg>
      </Tile>
    ),
  },
  { title: "Effects", text: "Show installed Effects", icon: <Tile className="bg-[#4b5059] text-[27px] font-bold text-[#d8d8d8]">FX</Tile> },
  {
    title: "Loops", text: "Browse Studio One loop libraries",
    icon: (
      <Tile className="bg-[#7b8da7]">
        <Svg box="0 0 32 36" className="h-36 w-32 text-[#e0e0e0]">
          <path d="M0 4c4-5 28-5 32 0 1 12-8 32-16 32S-1 16 0 4z" />
          <path d="M19 5L7 18h7l-4 9 13-12h-7z" fill="#7b8da7" />
        </Svg>
      </Tile>
    ),
  },
  {
    title: "Files", text: "Browse files and folders",
    icon: (
      <Svg box="0 0 64 64" className="size-64">
        <path d="M3 1h20c3 0 5 8 9 8h29q3 0 3 3v48q0 3-3 3H3q-3 0-3-3V4q0-3 3-3z" fill="#4b5059" />
        <path d="M6 17h14l-7 8z" fill="#a8abaf" />
        <path d="M26 17h30v6H26z" fill="#a5a8ab" />
        <path d="M26 33h30v6H26z" fill="#d2d3d4" />
        <path d="M26 49h30v6H26z" fill="#fff" />
      </Svg>
    ),
  },
  {
    title: "Cloud", text: "PreSonus Shop and other services",
    icon: (
      <Tile className="bg-[#58595b]">
        <Svg box="0 0 54 32" className="h-32 w-54">
          <path d="M6 29a6 7 0 0 1 0-13 9 9 0 0 1 12-8 10 10 0 0 1 17 1v20z" fill="#b2b2b3" />
          <path d="M17 30a6 6 0 0 1 1-12 8 8 0 0 1 8-5 8 9 0 0 1 12-3 7 7 0 0 1 4 1 8 9 0 0 1 4 19z" fill="#fff" />
        </Svg>
      </Tile>
    ),
  },
  { title: "Pool", text: "Show files used in this Song", icon: <Tile className="bg-[#7b8da7]"><WaveGlyph className="h-38 w-46 text-[#dcdcdc]" /></Tile> },
];

function Browser() {
  return (
    <aside className="ml-8 w-672 shrink-0 bg-black p-2">
      <div className="flex h-full flex-col bg-[#202427]">
        <div className="flex h-61 shrink-0 bg-[#2e2d32] text-[18px] text-[#a0a2a4]">
          <div className="flex w-48 items-center justify-center bg-[#54595d]">
            <Svg box="0 0 24 24" className="size-24 text-[#efefef]">
              <path d="M12 0l12 12h-3v11h-6v-7H9v7H3V12H0z" />
            </Svg>
          </div>
          <div className="flex items-center pl-14 whitespace-nowrap">
            <span className="w-148">Instruments</span>
            <span className="w-98">Effects</span>
            <span className="w-93">Loops</span>
            <span className="w-75">Files</span>
            <span className="w-91">Cloud</span>
            <span className="w-67">Pool</span>
            <Svg box="0 0 26 26" className="size-25">
              <circle cx="10" cy="10" r="8" fill="none" stroke="currentColor" strokeWidth="3.500" />
              <path d="M16 17l8 7" stroke="currentColor" strokeWidth="4.500" />
            </Svg>
          </div>
        </div>
        <div className="h-13 shrink-0 bg-[#54595d]" />
        <div className="flex flex-col gap-68 pt-54 pl-40">
          {BROWSER_ITEMS.map((item) => (
            <div key={item.title} className="flex h-64">
              {item.icon}
              <div className="ml-44 flex flex-col whitespace-nowrap">
                <span className="-mt-1 font-[Inter] text-[22.800px] font-light text-[#f2f2f2]">{item.title}</span>
                <span className="mt-19 text-[18.100px] text-white">{item.text}</span>
              </div>
            </div>
          ))}
        </div>
        <div className="mt-auto flex flex-col items-center gap-22 pb-40 text-[18px] text-[#f0f0f0]">
          <button className="flex h-44 w-360 items-center justify-center border-b-4 border-[#434444] bg-[#555657]">Re-Index Presets</button>
          <button className="flex h-44 w-360 items-center justify-center border-b-4 border-[#434444] bg-[#555657]">Update Plug-Ins</button>
        </div>
      </div>
    </aside>
  );
}

/* ---------- transport ---------- */

const Stack = ({ className, top, bottom, center }) => (
  <div className={`flex shrink-0 flex-col pt-15 whitespace-nowrap ${center ? "items-center" : "items-start"} ${className}`}>
    <div className="flex h-30 items-center">{top}</div>
    <div className="flex h-30 items-center">{bottom}</div>
  </div>
);

const Label = ({ children, className = "" }) => <span className={`text-[18px] text-[#9a9a9a] ${className}`}>{children}</span>;

function Transport() {
  return (
    <footer className="flex h-98 shrink-0 flex-col bg-[#60686e]">
      <div className="flex h-88">
        <div className="ml-1009 flex h-84 w-2753 shrink-0 bg-[#151515] text-[20.500px] text-[#dedede] [clip-path:polygon(0_0,100%_0,calc(100%_-_21px)_100%,15px_100%)]">
          <Stack
            center
            className="ml-51 w-62"
            top={
              <Svg box="0 0 50 28" className="h-28 w-50 text-[#4f5d66]">
                <path d="M0 9l7 5-7 6zM50 9l-7 5 7 6z" />
                <circle cx="25" cy="14" r="12.500" fill="none" stroke="currentColor" strokeWidth="2" />
                <circle cx="17" cy="14" r="2.500" /><circle cx="33" cy="14" r="2.500" /><circle cx="19.500" cy="8" r="2.500" /><circle cx="30.500" cy="8" r="2.500" /><circle cx="25" cy="6" r="2.500" />
                <path d="M23 20h4v6h-4z" />
              </Svg>
            }
            bottom={<Label>MIDI</Label>}
          />
          <div className="ml-18 flex w-122 flex-col pt-16">
            <div className="flex h-10 bg-[#36393d]">
              <div className="w-2 bg-[#4fa7d8]" />
              <div className="ml-auto w-10 bg-[#323f46]" />
            </div>
            <div className="mt-4 flex h-10 bg-[#36393d]">
              <div className="ml-auto w-10 bg-[#323f46]" />
            </div>
            <Label className="mt-13">Performance</Label>
          </div>
          <div className="ml-29 flex w-48 items-center">
            <Svg box="-24 -24 48 48" className="size-48 text-[#9a9a9a]">
              {Array.from({ length: 12 }, (_, i) => (
                <circle key={i} r="3.200" cx={21 * Math.sin((i * Math.PI) / 6)} cy={-21 * Math.cos((i * Math.PI) / 6)} />
              ))}
            </Svg>
          </div>
          <Stack className="ml-27 w-138" top="44.1 kHz" bottom="0.0 ms" />
          <Stack className="w-180" top="47:03 days" bottom={<Label>Record Max</Label>} />
          <Stack center className="w-164" top={<span className="text-[20px] tracking-[1.400px] text-[#b4b4b4]">00:00:00.000</span>} bottom={<Label className="pr-22">Seconds</Label>} />
          <Stack center className="ml-52 w-272" top={<span className="text-[28px] tracking-[1.800px] text-[#c4c4c4]">00001.01.01.00</span>} bottom={<Label className="pr-30">Bars</Label>} />
          <div className="ml-40 flex items-center text-[#c2c2c2]">
            <Svg box="0 0 22 26" className="h-26 w-22"><path d="M22 0v26L0 13z" /></Svg>
            <Svg box="0 0 36 26" className="ml-22 h-26 w-36"><path d="M20 0v26L0 13zM36 0v26L16 13z" /></Svg>
            <Svg box="0 0 37 26" className="ml-28 h-26 w-37"><path d="M0 0v26l20-13zM16 0v26l21-13z" /></Svg>
            <Svg box="0 0 23 26" className="ml-16 h-26 w-23"><path d="M0 0v26l23-13z" /></Svg>
            <Svg box="0 0 24 26" className="ml-29 h-26 w-24"><path d="M0 0h3v26H0zM24 0v26L4 13z" /></Svg>
            <div className="ml-54 h-40 w-42 bg-[#3eb1d6]" />
            <Svg box="0 0 35 40" className="ml-36 h-40 w-35"><path d="M0 0l35 20L0 40z" /></Svg>
            <Dot className="ml-28 size-40 bg-[#c2c2c2]" />
            <Svg box="0 0 64 40" className="ml-32 h-40 w-64 text-[#8c8c8c]">
              <path d="M22 38h-4C-2 38-2 2 18 2h28c20 0 20 36 0 36h-8l7-14M16 38h5l6-14" fill="none" stroke="currentColor" strokeWidth="4" />
            </Svg>
          </div>
          <Stack className="ml-36 w-46 font-bold text-[#5f8ca3]" top="L" bottom="R" />
          <Stack className="w-194 tracking-[0.700px]" top="00064.02.01.33" bottom="00069.01.02.75" />
          <Stack
            className="ml-19 w-33"
            top={<Svg box="0 0 33 12" className="h-12 w-33 text-[#d0d0d0]"><path d="M0 2h10l8 8h14M2 10h3M8 10h3" fill="none" stroke="currentColor" strokeWidth="2.500" /></Svg>}
            bottom={<Wrench className="size-22 text-[#9a9a9a]" />}
          />
          <Stack
            className="ml-19 w-33 text-[#9a9a9a]"
            top={<Svg box="0 0 30 18" className="h-18 w-30"><path d="M0 0h2v18H0zM13 0h2v18h-2zM14 4h15v9H14zM4 8h2v3H4zM8 8h2v3H8z" /></Svg>}
            bottom={<Svg box="0 0 33 18" className="h-18 w-33"><path d="M8 0h2v18H8zM23 0h2v18h-2zM10 4h13v9H10zM0 8h2v3H0zM4 8h2v3H4zM28 8h2v3h-2z" /></Svg>}
          />
          <Stack
            className="ml-18 w-109"
            top={
              <div className="flex items-center pl-5 text-[#9a9a9a]">
                <Dot className="size-19 bg-[#727876]" />
                <Wrench className="ml-20 size-22" />
                <Svg box="0 0 24 20" className="ml-18 h-20 w-24"><path d="M9 0h5l8 20H0zM8 3l8 14 2-1L10 2z" fillRule="evenodd" /></Svg>
              </div>
            }
            bottom={<Label>Metronome</Label>}
          />
          <Stack center className="ml-31 w-64" top="4 /4" bottom={<Label>Timing</Label>} />
          <Stack center className="ml-33 w-84" top="120.00" bottom={<Label>Tempo</Label>} />
          <div className="ml-33 flex w-172 flex-col pt-20">
            <div className="h-8 w-134 bg-[#36393d]" />
            <div className="mt-2 h-8 w-134 bg-[#36393d]" />
            <div className="mt-12 flex h-18 items-center">
              <div className="h-18 w-99 bg-[repeating-linear-gradient(90deg,#4f93b8_0_2px,#1d2c35_2px_3.200px)]" />
              <div className="h-18 w-35 bg-[repeating-linear-gradient(90deg,#3a3d40_0_2px,#151515_2px_3.200px)]" />
              <Svg box="0 0 34 20" className="ml-5 h-20 w-34 text-[#55b8de]">
                <circle cx="10" cy="10" r="9.500" />
                <circle cx="23.500" cy="10" r="8.500" fill="#151515" stroke="currentColor" strokeWidth="2.500" />
              </Svg>
            </div>
          </div>
        </div>
        <div className="ml-auto flex text-[19.700px] text-[#e6e6e6]">
          <div className="flex w-112 items-center justify-center border-l-2 border-[#4b5255] pt-10">Edit</div>
          <div className="flex w-113 items-center justify-center border-l-2 border-[#4b5255] pt-10">Mix</div>
          <div className="flex w-131 items-center justify-center border-l-2 border-[#4b5255] bg-[#5380a0] pt-10">Browse</div>
        </div>
      </div>
      <div className="h-12 bg-linear-to-b from-[#454a4c] to-[#333335]" />
    </footer>
  );
}

export default function App() {
  return (
    <div className="flex h-[2262px] w-[4096px] flex-col overflow-hidden rounded-t-[7px] bg-[#242424] font-['Liberation_Sans',Arial,sans-serif] leading-none [--spacing:0.8003px]">
      <TitleBar />
      <Toolbar />
      <main className="flex h-2600 shrink-0 border-y-2 border-black bg-[#242424] px-4 py-4">
        <Inspector />
        <section className="ml-4 w-4042 shrink-0 bg-black p-2">
          <div className="flex h-full flex-col">
            <div className="flex h-2550 shrink-0">
              <TrackColumn />
              <div className="w-2 shrink-0 bg-black" />
              <Timeline />
            </div>
            <ArrangeFooter />
          </div>
        </section>
        <Browser />
      </main>
      <Transport />
    </div>
  );
}
